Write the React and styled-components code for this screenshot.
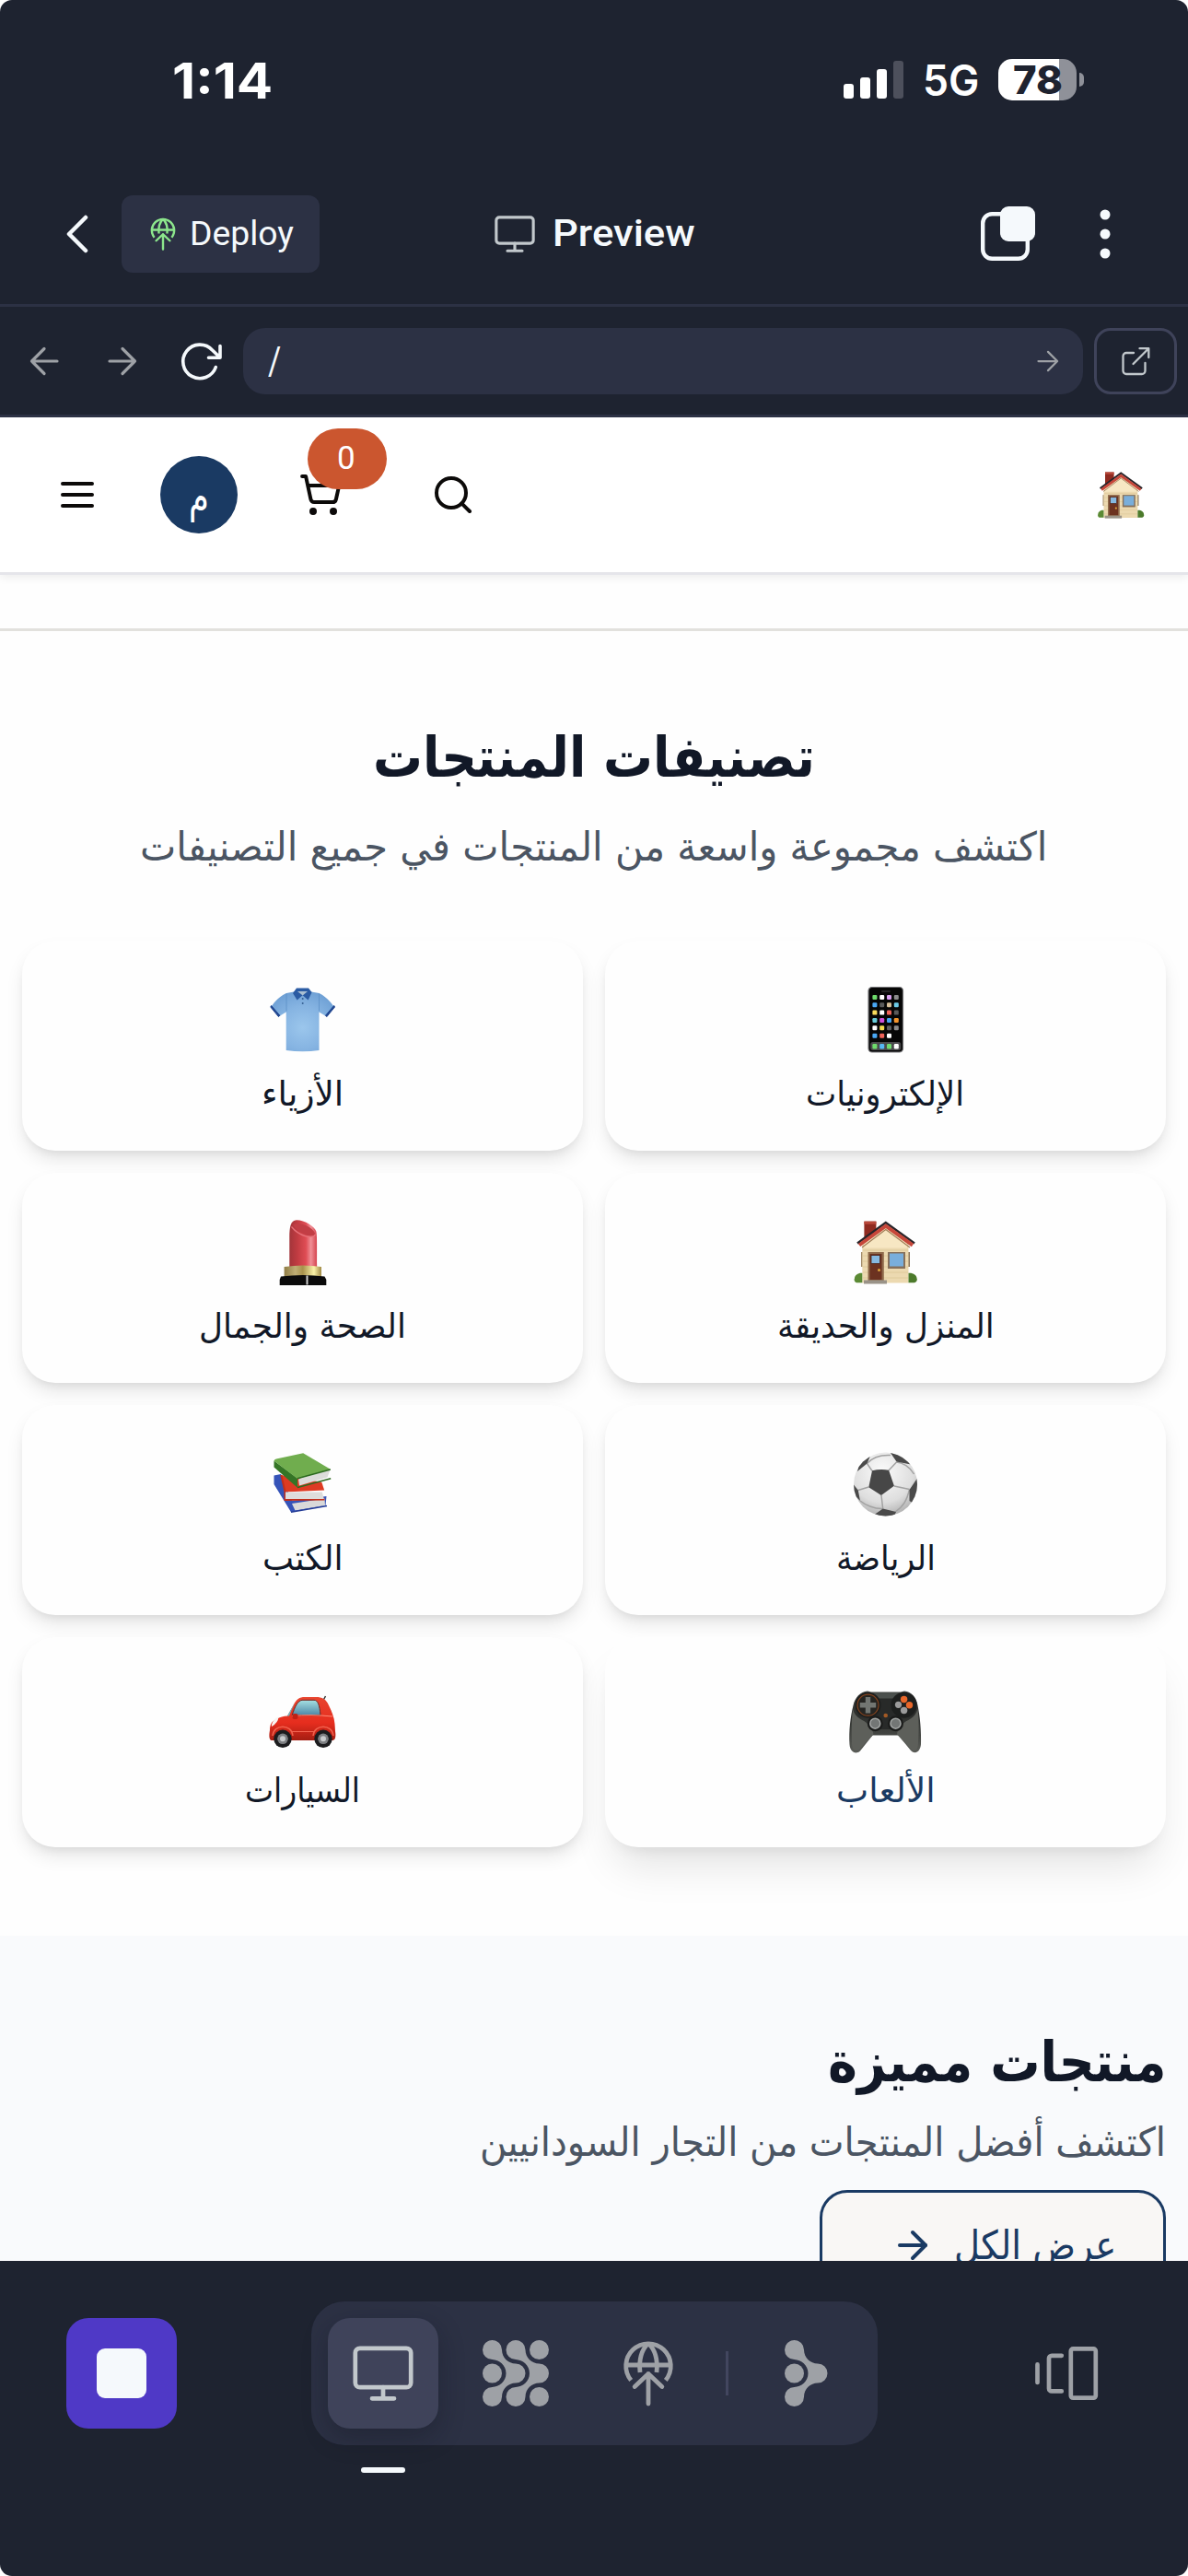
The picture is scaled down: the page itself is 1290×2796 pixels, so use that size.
import React, { useLayoutEffect, useRef, useState } from "react";
import styled, { createGlobalStyle } from "styled-components";
import { ShoppingCart, Search, ArrowRight } from "lucide-react";

const c = {
  shell: "#1e2330",
  panel: "#2c3144",
  raised: "#3f435a",
  text: "#f5f9fc",
  dim: "#9ea1a6",
  soft: "#c2c8cc",
  navy: "#1a3a63",
  ink: "#111827",
  muted: "#4b5563",
};

const arabic = `"DejaVu Sans", sans-serif`;

const GlobalStyle = createGlobalStyle`
  * { box-sizing: border-box; }
  body { margin: 0; background: #fff; font-family: Roboto, sans-serif; }
  svg { display: block; overflow: visible; flex: none; }
`;

/* ---------- text fitted to a column width ---------- */

const FitBox = styled.span`
  display: flex;
  flex: none;
  width: ${(p) => p.$w}px;
  height: ${(p) => p.$lh}px;
  line-height: ${(p) => p.$lh}px;
  direction: ${(p) => (p.$rtl ? "rtl" : "ltr")};
  font-family: ${(p) => p.$font || (p.$rtl ? arabic : "Roboto, sans-serif")};
  font-size: ${(p) => p.$size}px;
  font-weight: ${(p) => p.$weight || 400};
  color: ${(p) => p.$color};
`;

const FitInner = styled.span`
  flex: none;
  white-space: nowrap;
  transform-origin: ${(p) => (p.$rtl ? "right" : "left")} center;
`;

function Fit({ children, w, size, lh, weight, color, rtl, font }) {
  const ref = useRef(null);
  const [scale, setScale] = useState(1);
  useLayoutEffect(() => {
    const natural = ref.current.offsetWidth;
    if (natural) setScale(w / natural);
  }, [w, size, children]);
  return (
    <FitBox $w={w} $lh={lh || size} $size={size} $weight={weight} $color={color} $rtl={rtl} $font={font}>
      <FitInner ref={ref} $rtl={rtl} style={{ transform: `scaleX(${scale})` }}>
        {children}
      </FitInner>
    </FitBox>
  );
}

/* ---------- layout ---------- */

const Phone = styled.div`
  width: 1290px;
  height: 2796px;
  display: flex;
  flex-direction: column;
  overflow: hidden;
  border-radius: 13px;
  background: #fefefe;
`;

const StatusBar = styled.div`
  height: 176px;
  flex: none;
  display: flex;
  justify-content: space-between;
  align-items: flex-start;
  padding: 64px 113px 0 187px;
  background: ${c.shell};
`;

const StatusRight = styled.div`
  display: flex;
  height: 45px;
  align-items: center;
`;

const Bars = styled.div`
  display: flex;
  align-items: flex-end;
  gap: 7px;
  height: 41px;
  margin-right: 21px;
`;

const Bar = styled.span`
  width: 11px;
  height: ${(p) => p.$h}px;
  border-radius: 3px;
  background: ${(p) => (p.$off ? "#4d505c" : "#fff")};
`;

const Battery = styled.div`
  display: flex;
  align-items: center;
  justify-content: center;
  width: 85px;
  height: 45px;
  margin-left: 21px;
  border-radius: 15px;
  background: linear-gradient(90deg, #fff 66px, #8f9199 66px);
`;

const BatteryTip = styled.span`
  width: 5px;
  height: 15px;
  margin-left: 3px;
  border-radius: 0 5px 5px 0;
  background: #8f9199;
`;

const TopBar = styled.div`
  height: 157px;
  flex: none;
  display: flex;
  align-items: center;
  padding: 2px 80px 0 60px;
  border-bottom: 3px solid ${c.panel};
  background: ${c.shell};
`;

const DeployButton = styled.div`
  display: flex;
  align-items: center;
  gap: 11px;
  width: 215px;
  height: 84px;
  margin-left: 24px;
  padding-left: 27px;
  border-radius: 12px;
  background: ${c.panel};
`;

const Title = styled.div`
  display: flex;
  align-items: center;
  gap: 17px;
  margin-left: 188px;
  flex: 1;
`;

const TopActions = styled.div`
  display: flex;
  align-items: center;
  gap: 68px;
`;

const UrlBar = styled.div`
  height: 120px;
  flex: none;
  display: flex;
  align-items: center;
  padding: 1px 12px 0 24px;
  border-bottom: 3px solid ${c.panel};
  background: ${c.shell};
`;

const NavIcons = styled.div`
  display: flex;
  align-items: center;
  gap: 37px;
  width: 240px;
`;

const Address = styled.div`
  display: flex;
  align-items: center;
  justify-content: space-between;
  width: 912px;
  height: 72px;
  padding: 0 20px 0 27px;
  border-radius: 24px;
  background: ${c.panel};
`;

const OpenButton = styled.div`
  display: flex;
  align-items: center;
  justify-content: center;
  width: 90px;
  height: 72px;
  margin-left: 12px;
  border: 3px solid ${c.raised};
  border-radius: 18px;
`;

const Site = styled.main`
  flex: 1;
  min-height: 0;
  overflow: hidden;
  display: flex;
  flex-direction: column;
`;

const SiteHeader = styled.header`
  height: 171px;
  flex: none;
  display: flex;
  align-items: center;
  padding: 0 48px 0 60px;
  border-bottom: 3px solid #e5e5ea;
  background: #fff;
  box-shadow: 0 3px 9px rgba(0, 0, 0, 0.07);
  color: #0c0a09;
`;

const Avatar = styled.div`
  display: flex;
  align-items: center;
  justify-content: center;
  width: 84px;
  height: 84px;
  margin: 0 66px;
  padding-top: 1px;
  border-radius: 50%;
  background: ${c.navy};
`;

const CartSlot = styled.div`
  position: relative;
  margin-right: 96px;
`;

const Badge = styled.div`
  position: absolute;
  left: 10px;
  top: -48px;
  display: flex;
  align-items: center;
  justify-content: center;
  width: 86px;
  height: 66px;
  padding-right: 2px;
  border-radius: 33px;
  background: #cb562f;
`;

const HomeSlot = styled.div`
  margin-left: auto;
`;

const Strip = styled.div`
  height: 61px;
  flex: none;
  border-bottom: 3px solid #e2e1dd;
`;

const Categories = styled.section`
  height: 1416px;
  flex: none;
  display: flex;
  flex-direction: column;
  align-items: center;
  padding: 95px 24px 0;
`;

const Grid = styled.div`
  direction: rtl;
  display: grid;
  grid-template-columns: 609px 609px;
  grid-auto-rows: 228px;
  gap: 24px;
  margin-top: 54px;
`;

const Card = styled.div`
  display: flex;
  flex-direction: column;
  align-items: center;
  gap: 15px;
  padding-top: 50px;
  border-radius: 36px;
  background: #fefefe;
  box-shadow: ${(p) =>
    p.$active
      ? "0 30px 45px -9px rgba(0,0,0,.1), 0 12px 18px -12px rgba(0,0,0,.1)"
      : "0 11px 20px -2px rgba(0,0,0,.1), 0 6px 12px -6px rgba(0,0,0,.1)"};
`;

const Featured = styled.section`
  flex: 1;
  min-height: 0;
  display: flex;
  flex-direction: column;
  align-items: flex-end;
  padding: 95px 24px 0;
  background: #f9fafc;
  overflow: hidden;
`;

const Lead = styled.div`
  padding-top: ${(p) => p.$top || 0}px;
  padding-bottom: ${(p) => p.$bottom || 0}px;
`;

const ViewAll = styled.div`
  flex: none;
  direction: rtl;
  display: flex;
  align-items: center;
  gap: 21px;
  width: 376px;
  height: 120px;
  padding-right: 51px;
  border: 3px solid ${c.navy};
  border-radius: 30px;
  background: #f9f7f5;
  color: ${c.navy};
`;

const Dock = styled.nav`
  height: 342px;
  flex: none;
  display: flex;
  align-items: flex-start;
  padding: 44px 94px 0 72px;
  background: ${c.shell};
`;

const StopButton = styled.div`
  display: flex;
  align-items: center;
  justify-content: center;
  width: 120px;
  height: 120px;
  margin-top: 18px;
  border-radius: 24px;
  background: #4f39c6;
`;

const StopSquare = styled.span`
  width: 54px;
  height: 54px;
  border-radius: 9px;
  background: ${c.text};
`;

const TabColumn = styled.div`
  margin-left: 146px;
  display: flex;
  flex-direction: column;
  gap: 24px;
`;

const TabGroup = styled.div`
  display: flex;
  align-items: center;
  width: 615px;
  height: 156px;
  padding-left: 18px;
  border-radius: 36px;
  background: ${c.panel};
`;

const Tab = styled.div`
  display: flex;
  flex: none;
  align-items: center;
  justify-content: center;
  width: 120px;
  height: 120px;
  margin-right: 24px;
  border-radius: 24px;
  background: ${(p) => (p.$active ? c.raised : "transparent")};
  box-shadow: ${(p) => (p.$active ? "0 10px 28px rgba(14,18,28,.3)" : "none")};
`;

const Divider = styled.span`
  flex: none;
  width: 3px;
  height: 48px;
  margin-right: 24px;
  background: #42465f;
`;

const Indicator = styled.span`
  width: 48px;
  height: 6px;
  margin-left: 54px;
  border-radius: 3px;
  background: ${c.text};
`;

const DockEnd = styled.div`
  margin-left: auto;
  margin-top: 42px;
`;

/* ---------- line icons ---------- */

const Line = ({ w, h, box, color, sw, children }) => (
  <svg width={w} height={h} viewBox={box} fill="none" stroke={color} strokeWidth={sw} strokeLinecap="round" strokeLinejoin="round">
    {children}
  </svg>
);

const Back = () => (
  <Line w={48} h={48} box="0 0 48 48" color={c.text} sw={4.5}>
    <path d="M33 6 15 24l18 18" />
  </Line>
);

const Burger = () => (
  <Line w={48} h={48} box="0 0 48 48" color="#0c0a09" sw={4}>
    <path d="M8 12h32M8 24h32M8 36h32" />
  </Line>
);

const GlobeUp = ({ size, color, sw = 4.8 }) => (
  <Line w={size} h={size} box="0 0 72 72" color={color} sw={sw}>
    <path strokeLinecap="butt" d="M17.2 43.5A24.3 24.3 0 1 1 54.8 43.5" />
    <path d="M12 27h48" strokeLinecap="butt" />
    <path strokeLinecap="butt" d="M36 3.5c-7 6.500-10.500 17-9 31.500M36 3.500c7 6.500 10.500 17 9 31.500" />
    <path d="M36 69V36.500M21.200 50.500 36 36.500l14.800 14" />
  </Line>
);

const Monitor = ({ size, color }) => (
  <Line w={size} h={size} box="0 0 72 72" color={color} sw={4.7}>
    <rect x="5.8" y="8.8" width="60.4" height="42.4" rx="5" />
    <path d="M36 51v12M24 63.300h24" />
  </Line>
);

const Copies = () => (
  <svg width="60" height="60" viewBox="0 0 60 60">
    <rect x="5.200" y="8.200" width="48.600" height="48.600" rx="10" fill="none" stroke={c.text} strokeWidth="4.400" />
    <rect x="24" y="0" width="38" height="38" rx="9" fill={c.text} />
  </svg>
);

const Dots = () => (
  <svg width="20" height="54" viewBox="0 0 20 54" fill={c.text}>
    <circle cx="10" cy="6" r="5.500" />
    <circle cx="10" cy="27" r="5.500" />
    <circle cx="10" cy="48" r="5.500" />
  </svg>
);

const Arrow = ({ size = 48, left, color = c.dim, sw = 3.200 }) => (
  <Line w={size} h={size} box="0 0 48 48" color={color} sw={sw}>
    <path d={left ? "M38 24H10.500M24 10.500 10.500 24 24 37.500" : "M10 24h27.500M24 10.500 37.500 24 24 37.500"} />
  </Line>
);

const Refresh = () => (
  <Line w={48} h={48} box="0 0 48 48" color={c.text} sw={3.600}>
    <path d="M40.300 30.500A18.300 18.300 0 1 1 36.500 12L44.800 20M45 7.500V20.200H32.500" />
  </Line>
);

const OpenOut = () => (
  <Line w={36} h={36} box="0 0 36 36" color={c.soft} sw={2.300}>
    <path d="M16 9H8a3.500 3.500 0 0 0-3.500 3.500V28.500A3.500 3.500 0 0 0 8 32h17a3.500 3.500 0 0 0 3.500-3.500V20M15.500 21 32 4.500M22.500 4.200H32.300V14" />
  </Line>
);

const blob = (x) =>
  `M${x + 21} 10.500C${x + 21} 19 ${x + 28} 25.500 ${x + 36} 25.500A10.500 10.500 0 0 1 ${x + 36} 46.500C${x + 28} 46.500 ${x + 21} 53 ${x + 21} 61.500A10.500 10.500 0 1 1 ${x + 10.5} 51C${x + 18} 50.500 ${x + 25.5} 45 ${x + 25.5} 36C${x + 25.5} 27 ${x + 18} 21.500 ${x + 10.5} 21A10.500 10.500 0 1 1 ${x + 21} 10.500Z`;

const Mesh = () => (
  <svg width="72" height="72" viewBox="0 0 72 72" fill={c.dim}>
    <path d={blob(0)} />
    <path d={blob(25.5)} />
    <circle cx="10.500" cy="36" r="10.500" />
    <circle cx="61.500" cy="10.500" r="10.500" />
    <circle cx="61.500" cy="61.500" r="10.500" />
  </svg>
);

const Agent = () => (
  <svg width="46" height="72" viewBox="0 0 46 72" fill={c.dim}>
    <path d={blob(0)} />
    <circle cx="10.500" cy="36" r="10.500" />
  </svg>
);

const Switcher = () => (
  <Line w={72} h={72} box="0 0 72 72" color={c.dim} sw={4.700}>
    <rect x="38.800" y="9.400" width="27" height="53.300" rx="2.500" />
    <path d="M28.800 16.800H18a3 3 0 0 0-3 3V52.400a3 3 0 0 0 3 3H28.800M2.500 26.400V46" />
  </Line>
);

/* ---------- category pictures, drawn in an 80 x 72 box ---------- */

const Pic = ({ children, w = 80, h = 72, box = "0 0 80 72" }) => (
  <svg width={w} height={h} viewBox={box} preserveAspectRatio="none">
    {children}
  </svg>
);

const houseArt = (
  <>
    <rect x="16.400" y="2.700" width="13" height="20" fill="#8f2a20" />
    <rect x="16.400" y="2.700" width="13" height="3" fill="#b9483a" />
    <rect x="13" y="36" width="3" height="16" fill="#a18a68" />
    <rect x="63" y="36" width="3" height="16" fill="#8a7458" />
    <path d="M14.300 69.600V26L39.800 9 64.500 26v43.600Z" fill="#ecd9b0" />
    <path d="M16 24.500 39.800 9 63 24.500v7H16Z" fill="#f7e7c3" />
    <path d="M15 34h49M15 40h49M15 46h49M15 52h49M15 58h49M15 64h49" stroke="#dcc697" strokeWidth=".8" />
    <path d="M9 26.500 39.800 4 71 26.500" fill="none" stroke="#272429" strokeWidth="2.600" />
    <path d="M11 28.500 39.800 7.700 69 28.500" fill="none" stroke="#c6473a" strokeWidth="4" />
    <path d="M14 31 39.800 11.500 66 31" fill="none" stroke="#a07d58" strokeWidth="1.200" />
    <rect x="20.500" y="36" width="17.300" height="31" fill="#8f6a4b" />
    <rect x="22.500" y="38" width="13" height="28" fill="#6c3220" />
    <rect x="24" y="39.500" width="9.500" height="9" fill="#86b9e0" stroke="#4a2418" strokeWidth=".8" />
    <circle cx="32.500" cy="55.500" r="1.500" fill="#e0a83c" />
    <rect x="42" y="36" width="19" height="18" fill="#86705a" />
    <rect x="44" y="37.500" width="15" height="14" fill="#79aedb" />
    <rect x="16" y="66.500" width="25" height="4" fill="#9a9388" />
    <path d="M14.300 69.200H8a3.500 3.500 0 0 1-2-5c0-3 4-6 8.300-5.500Z" fill="#5b8a34" />
    <path d="M64.500 69.200H71a3.500 3.500 0 0 0 2.500-5c0-3-4-6-9-5.500Z" fill="#4c7a2b" />
  </>
);

const apps = [
  ["#6edb6c", "#fff", "#d9a0f0", "#8b8b8b"],
  ["#4aa8f5", "#5a5a5a", "#d8c09a", "#6ccbe8"],
  ["#f7dc5c", "#fff", "#ee6258", "#5a5a5a"],
  ["#68ccda", "#cf4fd8", "#45a5f2", "#f3952c"],
  ["#fff", "#f5dc4e", "#5f5f5f", "#8b8b8b"],
  ["#4aa8f5", "#ee6258", "#fff"],
];

const Pictures = {
  phone: () => (
    <Pic>
      <rect x="21" y=".5" width="37.500" height="70.500" rx="4" fill="#060606" stroke="#77777a" strokeWidth="1.200" />
      <rect x="35" y="4" width="10" height="2" rx="1" fill="#242424" />
      {apps.map((row, r) =>
        row.map((f, i) => <rect key={`${r}-${i}`} x={25.4 + i * 7.8} y={8.9 + r * 8.35} width="5" height="5" rx="1.200" fill={f} />)
      )}
      <rect x="23.200" y="60" width="33" height="9" rx="2.500" fill="#4a4a4c" />
      {["#6edb6c", "#55b8f3", "#6edb6c", "#fff"].map((f, i) => (
        <rect key={i} x={25.4 + i * 7.8} y="62" width="5" height="5.400" rx="1.200" fill={f} />
      ))}
    </Pic>
  ),
  shirt: () => (
    <Pic>
      <defs>
        <radialGradient id="cloth" cx=".5" cy=".6" r=".65">
          <stop offset="0" stopColor="#9bc6ec" />
          <stop offset=".55" stopColor="#86b4e2" />
          <stop offset="1" stopColor="#6d9fd4" />
        </radialGradient>
      </defs>
      <path d="M30 5.500 22 7C15 10 9.500 16 5.600 21.500L14.300 32l7.400-4.600V69q18 2.500 35.800 0V27.400L65 32l8.700-10.500C69.500 16 64 10 57.500 7L49 5.500Z" fill="url(#cloth)" />
      <path d="M5.600 20.500 14.800 31.200 13.500 32.600 4.800 22ZM73.700 20.500 64.500 31.200 65.800 32.600 74.500 22Z" fill="#1f4590" stroke="#1f4590" />
      <path d="M22 7.500v19M57.500 7.500v19" stroke="#5c8fc6" strokeWidth=".8" />
      <path d="M33 1.500h13L49.600 6l-4 8.500-6-5.200-6 5.200L29 7Z" fill="#2a5ba3" />
      <path d="M34 5h11l-5.300 4.500Z" fill="#a9bfd2" />
      <circle cx="39.700" cy="13" r="1" fill="#355f91" />
      <circle cx="39.700" cy="18" r="1" fill="#355f91" />
    </Pic>
  ),
  house: () => <Pic>{houseArt}</Pic>,
  lipstick: () => (
    <Pic>
      <defs>
        <linearGradient id="stick">
          <stop offset="0" stopColor="#a3353a" />
          <stop offset=".3" stopColor="#c23c42" />
          <stop offset=".6" stopColor="#df4d55" />
          <stop offset=".78" stopColor="#f08f96" />
          <stop offset="1" stopColor="#d4434d" />
        </linearGradient>
        <linearGradient id="gold">
          <stop offset="0" stopColor="#8f7c45" />
          <stop offset=".3" stopColor="#bfae75" />
          <stop offset=".5" stopColor="#a8924c" />
          <stop offset=".8" stopColor="#fbf3a8" />
          <stop offset="1" stopColor="#a08a45" />
        </linearGradient>
      </defs>
      <path d="M25.300 52V20C25.300 9 26.500 1.500 33 1.300 42 1.300 53 8.500 54.300 13.500 55.300 18 55.200 24 55.200 52Z" fill="url(#stick)" />
      <path d="M29 6.500C34 3 49 6.500 53 15.500c0 6-14 4-24-9Z" fill="#c23e45" />
      <path d="M27.500 8.500C36 19 50 22 53.500 17" fill="none" stroke="#e7727a" strokeWidth="1.200" />
      <path d="M19.600 52q20.400-3 40.400 0v11H19.600Z" fill="url(#gold)" />
      <path d="M16 62.500q24-3 47.500 0L65.300 66v6H14.700v-6Z" fill="#0b0b0b" />
      <path d="M44.500 61.500v10" stroke="#cfcfcf" strokeWidth="2" />
    </Pic>
  ),
  ball: () => (
    <Pic>
      <defs>
        <radialGradient id="leather" cx=".45" cy=".3" r=".75">
          <stop offset="0" stopColor="#fbfbfb" />
          <stop offset=".65" stopColor="#dedede" />
          <stop offset="1" stopColor="#a9a9a9" />
        </radialGradient>
        <clipPath id="round"><circle cx="39.500" cy="36" r="34.500" /></clipPath>
      </defs>
      <circle cx="39.500" cy="36" r="34.500" fill="url(#leather)" />
      <g clipPath="url(#round)">
        <g fill="none" stroke="#a2a2a2" strokeWidth="1.500">
          <path d="M25 21.500 19.500 13.500M43 21 51.500 12M49 38l16.500 3.500M35 48l1.700 14.500M21.300 39 9.800 42.500M51.500 12C58 12.500 66 17 70.500 25M19.500 13.500C26 6 34 4 45 4.500M65.500 41.500C63 53 59 60 50 66M36.700 62.500C28 63 18 59 12 54" />
        </g>
        <path d="M25 21.200q9-2 18.100-.5L48.900 37.700 34.900 48 21.300 39.200Z" fill="#474747" />
        <path d="M11 14 24 3l-4.500 10.500L9 22ZM45 2l9 .5 13 12-15.500-3ZM75 28l-9.500 14v12l6 4 8-22ZM26 70l10.700-7.500L51 66l-3 7ZM3 34 9.800 42.500 12 54l-8-8Z" fill="#4a4a4a" />
      </g>
    </Pic>
  ),
  books: () => (
    <Pic>
      <path d="M8.500 26.600 16 25 28 54l37.500-5-1 10L27 66.300 8.500 36Z" fill="#3553b8" />
      <path d="M28 57 63.500 51.500l.5 7.500L31.500 64.500Z" fill="#d9d9d9" />
      <path d="M27 66.300 66 59.500" stroke="#243c96" strokeWidth="1.500" />
      <path d="M16.300 26 60.300 33.800 63.200 42.500 20 44.500Z" fill="#de3b23" />
      <path d="M16.300 26 20.500 44v9l43 -.5" fill="none" stroke="#c32f1b" strokeWidth="2" />
      <path d="M21 44.500h39.800l2 7.500H21Z" fill="#dedddb" />
      <path d="M8.500 10.600 34 29.500v10.200L8.500 17.500Z" fill="#357526" />
      <path d="M8.500 10.600Q9 9 11 8.500L40.200 2.300 69.800 19.800 34 30Z" fill="#70ad4e" />
      <path d="M35 30.500 69.500 20.500 66.500 28.500 36 37.500Z" fill="#dcdcda" />
      <path d="M34 39.500 70.200 29.800M34 29.800 69.800 20" stroke="#2c6a20" strokeWidth="1.600" />
    </Pic>
  ),
  gamepad: () => (
    <Pic>
      <defs>
        <linearGradient id="pad" x2="0" y2="1">
          <stop offset="0" stopColor="#444745" />
          <stop offset=".4" stopColor="#2b2d2b" />
          <stop offset="1" stopColor="#5b5d58" />
        </linearGradient>
      </defs>
      <path d="M20 8.500 24 9.500h32L60 8.500C68 9.500 73 15 74.500 24 77 36 78.500 52 78 66c-.5 8-6 12-11 7L53.500 56.500h-28L12 73.500c-5 4.500-11 1-11.500-7C-.5 52 1.500 36 4.500 24 6.500 15 12 9.500 20 8.500Z" fill="url(#pad)" />
      <path d="M4 28c3 11 12 11 17 17 5 8 6 8 5 11L12 71c-5 5-9 1-9-6C2.500 50 2.500 40 4 28ZM74.500 28c-3 11-12 11-17 17-5 8-6 8-5 11L66.500 71c5 5 8.500 1 8.500-6 1-15 1-25-.5-37Z" fill="#5d5f5a" />
      <path d="M22 11h34l-6 39H28Z" fill="#282a29" />
      <path d="M24 10.500h32l-1.500 6H25.500Z" fill="#4b504d" />
      <circle cx="20.500" cy="23.700" r="14" fill="#1d1f1e" />
      <circle cx="59.600" cy="23.700" r="14" fill="#1d1f1e" />
      <circle cx="20.500" cy="23.700" r="11.500" fill="#252522" stroke="#84431f" strokeWidth="1.200" />
      <path d="M17.800 15h5.400v6h6v5.400h-6v6h-5.400v-6h-6V21h6Z" fill="#727672" />
      <circle cx="59.600" cy="17.500" r="3.700" fill="#e8672a" />
      <circle cx="65.500" cy="23.700" r="3.700" fill="#e8672a" />
      <circle cx="53.500" cy="23.300" r="3.600" fill="#9b9b9b" />
      <circle cx="59.600" cy="29.500" r="3.700" fill="#9b9b9b" />
      <circle cx="39.700" cy="35" r="2.300" fill="#a35a25" />
      <circle cx="28.300" cy="43.700" r="8.500" fill="#1b1c1b" />
      <circle cx="50.500" cy="43.700" r="8.500" fill="#1b1c1b" />
      <circle cx="28.300" cy="43.700" r="5.500" fill="#737675" stroke="#a4a7a6" strokeWidth="1.500" />
      <circle cx="50.500" cy="43.700" r="5.500" fill="#737675" stroke="#a4a7a6" strokeWidth="1.500" />
    </Pic>
  ),
  car: () => (
    <Pic>
      <defs>
        <linearGradient id="paint" x2="0" y2="1">
          <stop offset="0" stopColor="#e8452f" />
          <stop offset=".6" stopColor="#e62d1e" />
          <stop offset="1" stopColor="#a51d12" />
        </linearGradient>
        <linearGradient id="glass" x2="0" y2="1">
          <stop offset="0" stopColor="#a5e0e2" />
          <stop offset="1" stopColor="#4d87a6" />
        </linearGradient>
      </defs>
      <path d="M62 18.500 64.500 14" stroke="#333" strokeWidth="1.500" />
      <path d="M68 26q4 5 4 12l-6-6Z" fill="#5aa9bb" />
      <path d="M23 35.500 29 25c4-8 7-10 13-10h12c7 0 11 2 14 9 3 6 6 13 6.500 20l.5 8c1 6 0 10-3 10H6c-3 0-3-6-2-11 0-6 2-10 7-12 4-2 8-3.500 12-3.500Z" fill="url(#paint)" />
      <path d="M28.200 34.700C31 26 34 19 39 18.300h13c4 0 6 5 7 16.400Z" fill="url(#glass)" stroke="#6e2b25" />
      <path d="M23 35.500 31 21l-6 14.500Z" fill="#69b8c6" />
      <path d="M6 45q2-7 7.500-8.500Q13 43 6 47Z" fill="#f8f4f2" />
      <path d="M28 35.500q20-2 44 .5" stroke="#ff8a77" strokeWidth="1" fill="none" />
      <rect x="28.500" y="33" width="6" height="6" rx="2" fill="#bf2216" />
      <path d="M28 52.500h24" stroke="#f26552" />
      <path d="M7 57c1-13 21-13 22 0M51 57c1-13 21-13 22 0" fill="none" stroke="#f3614d" strokeWidth="1.500" />
      {[18, 62].map((x) => (
        <g key={x}>
          <circle cx={x} cy="60.300" r="9.700" fill="#1c1c1e" />
          <circle cx={x} cy="60.300" r="5.800" fill="#7d7f82" />
          <circle cx={x} cy="60.300" r="3" fill="#c9cbcd" />
        </g>
      ))}
    </Pic>
  ),
};

const categories = [
  { name: "الإلكترونيات", pic: "phone", w: 172 },
  { name: "الأزياء", pic: "shirt", w: 89 },
  { name: "المنزل والحديقة", pic: "house", w: 236 },
  { name: "الصحة والجمال", pic: "lipstick", w: 225 },
  { name: "الرياضة", pic: "ball", w: 108 },
  { name: "الكتب", pic: "books", w: 87 },
  { name: "الألعاب", pic: "gamepad", w: 108, active: true },
  { name: "السيارات", pic: "car", w: 125 },
];

function CategoryCard({ item }) {
  const Picture = Pictures[item.pic];
  return (
    <Card $active={item.active}>
      <Picture />
      <Fit rtl w={item.w} size={37} lh={60} color={item.active ? c.navy : c.ink}>
        {item.name}
      </Fit>
    </Card>
  );
}

export default function App() {
  return (
    <>
      <GlobalStyle />
      <Phone>
        <StatusBar>
          <Fit w={109} size={53} lh={48} weight={700} color="#fff" font="Inter, sans-serif">1:14</Fit>
          <StatusRight>
            <Bars>
              <Bar $h={16} />
              <Bar $h={23} />
              <Bar $h={32} />
              <Bar $h={41} $off />
            </Bars>
            <Fit w={61} size={46} lh={50} weight={600} color="#fff" font="Inter, sans-serif">5G</Fit>
            <Battery>
              <Fit w={54} size={42} lh={45} weight={800} color={c.shell} font="Inter, sans-serif">78</Fit>
            </Battery>
            <BatteryTip />
          </StatusRight>
        </StatusBar>

        <TopBar>
          <Back />
          <DeployButton>
            <GlobeUp size={36} color="#8ce68c" />
            <Fit w={113} size={36} lh={44} color={c.text}>Deploy</Fit>
          </DeployButton>
          <Title>
            <Monitor size={48} color={c.soft} />
            <Fit w={155} size={40} lh={48} weight={500} color={c.text}>Preview</Fit>
          </Title>
          <TopActions>
            <Copies />
            <Dots />
          </TopActions>
        </TopBar>

        <UrlBar>
          <NavIcons>
            <Arrow left />
            <Arrow />
            <Refresh />
          </NavIcons>
          <Address>
            <Fit w={14} size={42} lh={44} color={c.text}>/</Fit>
            <Arrow size={36} sw={3} />
          </Address>
          <OpenButton>
            <OpenOut />
          </OpenButton>
        </UrlBar>

        <Site>
          <SiteHeader>
            <Burger />
            <Avatar>
              <Fit rtl w={22} size={48} lh={50} color="#fff">م</Fit>
            </Avatar>
            <CartSlot>
              <ShoppingCart size={48} />
              <Badge>
                <Fit w={20} size={35} lh={40} color="#fff">0</Fit>
              </Badge>
            </CartSlot>
            <Search size={48} />
            <HomeSlot>
              <Pic w={50} h={51} box="5.500 2 68 69">{houseArt}</Pic>
            </HomeSlot>
          </SiteHeader>
          <Strip />
          <Categories>
            <Fit rtl w={480} size={61} lh={84} weight={700} color={c.ink}>تصنيفات المنتجات</Fit>
            <Lead $top={7}>
              <Fit rtl w={985} size={43} lh={96} color={c.muted}>اكتشف مجموعة واسعة من المنتجات في جميع التصنيفات</Fit>
            </Lead>
            <Grid>
              {categories.map((item) => (
                <CategoryCard key={item.name} item={item} />
              ))}
            </Grid>
          </Categories>
          <Featured>
            <Fit rtl w={368} size={61} lh={84} weight={700} color={c.ink}>منتجات مميزة</Fit>
            <Lead $bottom={7}>
              <Fit rtl w={745} size={43} lh={90} color={c.muted}>اكتشف أفضل المنتجات من التجار السودانيين</Fit>
            </Lead>
            <ViewAll>
              <Fit rtl w={176} size={43} lh={60} color={c.navy}>عرض الكل</Fit>
              <ArrowRight size={48} />
            </ViewAll>
          </Featured>
        </Site>

        <Dock>
          <StopButton>
            <StopSquare />
          </StopButton>
          <TabColumn>
            <TabGroup>
              <Tab $active>
                <Monitor size={72} color={c.soft} />
              </Tab>
              <Tab>
                <Mesh />
              </Tab>
              <Tab>
                <GlobeUp size={72} color={c.dim} />
              </Tab>
              <Divider />
              <Tab>
                <Agent />
              </Tab>
            </TabGroup>
            <Indicator />
          </TabColumn>
          <DockEnd>
            <Switcher />
          </DockEnd>
        </Dock>
      </Phone>
    </>
  );
}
